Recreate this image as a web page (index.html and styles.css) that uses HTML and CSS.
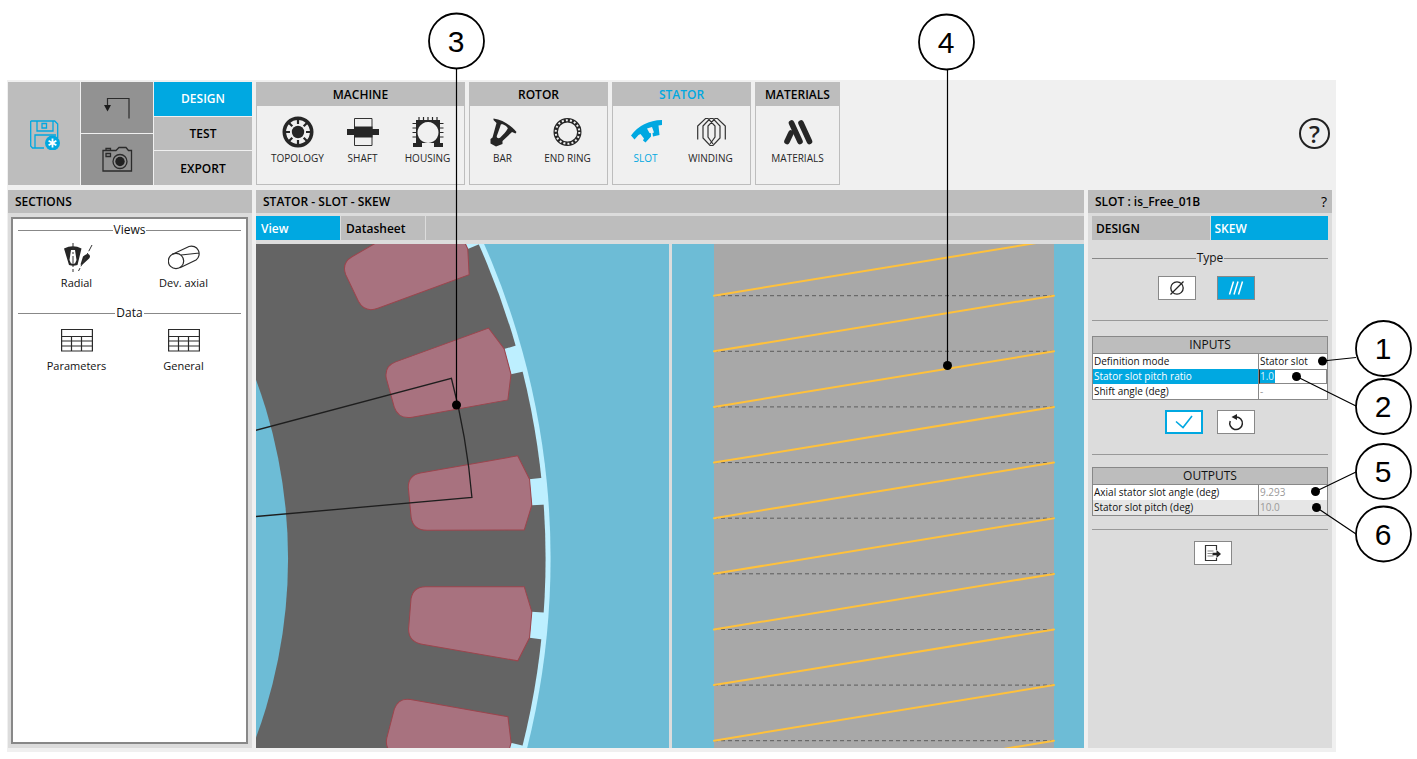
FILE: index.html
```html
<!DOCTYPE html>
<html lang="en">
<head>
<meta charset="utf-8">
<title>Stator - Slot - Skew</title>
<link rel="stylesheet" href="styles.css">
</head>
<body>
<div class="app">
  <header class="toolbar">
    <div class="file-area">
      <button class="tile tile-save" aria-label="Save">
        <svg class="icon" viewBox="0 0 32 32" fill="none" stroke="#00a8e1" stroke-width="1.3">
          <path d="M2.700 3h24l3 3v14M16 30H4.500l-1.800-2V3M9 3v10h16V3M14 5.500h4.500v4.500H14zM7 30V17h21"/>
          <circle cx="24.500" cy="25" r="7.500" fill="#00a8e1" stroke="none"/>
          <path d="M24.500 20.500v9M20.600 22.800l7.800 4.500M28.400 22.800l-7.800 4.500" stroke="#fff" stroke-width="1.800"/>
        </svg>
      </button>
      <div class="tile-pair">
        <button class="tile tile-dark" aria-label="Undo">
          <svg class="icon" viewBox="0 0 32 32" fill="none" stroke="#2b2b2b" stroke-width="1.200"><path d="M28 26.500V6.500H6.500V14"/><path d="M3 13h7l-3.500 6.500z" fill="#1c1c1c" stroke="none"/></svg>
        </button>
        <button class="tile tile-dark" aria-label="Capture">
          <svg class="icon" viewBox="0 0 32 32" fill="none" stroke="#2b2b2b" stroke-width="1.300"><path d="M2 6.500h13l3-3h7l2.500 3H30.500v20.500H2zM5 6.500v-2h4.500v2M5 9.500h4.500v3H5z"/><circle cx="19" cy="17.500" r="7"/><circle cx="19" cy="17.500" r="4.700" fill="#222" stroke="none"/></svg>
        </button>
      </div>
      <nav class="modes">
        <button class="mode is-active">DESIGN</button>
        <button class="mode">TEST</button>
        <button class="mode">EXPORT</button>
      </nav>
    </div>

    <section class="group group-machine">
      <h2 class="group-title">MACHINE</h2>
      <div class="group-items">
        <button class="tool">
          <svg class="icon" viewBox="0 0 32 32"><circle cx="16" cy="16" r="13.700" fill="none" stroke="#262626" stroke-width="3.600"/><circle cx="16" cy="16" r="6.200" fill="#262626"/><path d="M16 3v5M16 24v5M3 16h5M24 16h5M6.800 6.800l3.500 3.500M21.700 21.700l3.500 3.500M25.200 6.800l-3.500 3.500M10.300 21.700l-3.500 3.500" stroke="#262626" stroke-width="2.200"/></svg>
          TOPOLOGY</button>
        <button class="tool">
          <svg class="icon" viewBox="0 0 32 32"><path d="M7.500 2.500h17.500v27H7.500z" fill="none" stroke="#333"/><path d="M7 10.500h18.500V13H32v6h-6.500v2.500H7V19H0v-6h7z" fill="#262626"/></svg>
          SHAFT</button>
        <button class="tool">
          <svg class="icon" viewBox="0 0 32 32"><path fill="#262626" fill-rule="evenodd" d="M4 4h24v23h3v4h-9v-4H10v4H1v-4h3zM16 6a10.500 10.500 0 1 0 .01 0z"/><path d="M7 1v4M11.500 1v4M16 1v4M20.500 1v4M25 1v4M.5 7.500H5M.5 12H5M.5 16.500H5M.5 21H5M27 7.500h4.500M27 12h4.500M27 16.500h4.500M27 21h4.500" stroke="#262626" stroke-width="1.200"/></svg>
          HOUSING</button>
      </div>
    </section>
    <section class="group group-pair">
      <h2 class="group-title">ROTOR</h2>
      <div class="group-items">
        <button class="tool">
          <svg class="icon" viewBox="0 0 32 32"><path fill="#262626" fill-rule="evenodd" d="M6.500 2.500C16 4 23.500 9 29.500 16l-1 1.500-3.500-1.500-9.500 9v3L9 30.500l-5.500-3v-4.500l2-1.500L9.500 7 6.500 4zM13.800 8.500c-1 3.500-2.500 7.500-4 11.500-.5 2 2 3 3.500 1.500 3-3 5.500-5.500 7.500-9 0-2-5.500-5.500-7-4z"/></svg>
          BAR</button>
        <button class="tool">
          <svg class="icon" viewBox="0 0 32 32" fill="none"><circle cx="15.500" cy="16" r="11.800" stroke="#262626" stroke-width="4.400"/><circle cx="15.500" cy="16" r="11.800" stroke="#f0f0f0" stroke-width="2" stroke-dasharray="2 2.120"/></svg>
          END RING</button>
      </div>
    </section>
    <section class="group group-pair is-current">
      <h2 class="group-title">STATOR</h2>
      <div class="group-items">
        <button class="tool">
          <svg class="icon" viewBox="0 0 32 32"><path fill="#00a8e1" d="M1 19.500Q12 4.500 32 4v5l-3.500.5 1 9.500-6.500 1.500-.5-3.500 1.500-.5L22 11l-5 1.500 2.500 4.500 1.500.2V20.500L15.500 26.500 13 24.500l1-2L10.500 18 8.500 19l-4 4.500z"/></svg>
          SLOT</button>
        <button class="tool">
          <svg class="icon" viewBox="0 0 32 32" fill="none" stroke="#333" stroke-width="1.200"><path d="M2.700 23.500V10l7.800-7.500H13L20 10v11l-5 7M30.300 23.500V10l-7.800-7.500H20L13 10v11l5 7M8 10l7-7.500h3L25 10v12l-7 7.500h-3L8 22z"/></svg>
          WINDING</button>
      </div>
    </section>
    <section class="group group-single">
      <h2 class="group-title">MATERIALS</h2>
      <div class="group-items">
        <button class="tool">
          <svg class="icon" viewBox="0 0 32 32" stroke="#262626" stroke-width="5.600" stroke-linecap="round"><path d="M9.500 7l8.500 18.500M19 7l8.500 18.500"/><path d="M9 17l-4 8.500"/></svg>
          MATERIALS</button>
      </div>
    </section>
    <button class="help" aria-label="Help">?</button>
  </header>

  <main class="workspace">
    <aside class="panel panel-sections">
      <h2 class="panel-title">SECTIONS</h2>
      <div class="section-box">
        <h3 class="rule-title">Views</h3>
        <div class="section-grid">
          <button class="section-item">
            <svg class="icon" viewBox="0 0 32 32"><path fill="#262626" fill-rule="evenodd" d="M3 7.500Q12 3 20.500 7.500L16.500 24Q12 25.500 8 24zM10 9L8.500 19l1.500 3.500h4L15.500 19 14 9z"/><path fill="#262626" d="M22 15.500q5-4 6.500-1.500t-1.500 4.500L21 24l-1.500-.5z"/><path d="M12 2v29M31 4L17.500 30" fill="none" stroke="#333" stroke-dasharray="7 2 2 2"/></svg>
            Radial</button>
          <button class="section-item">
            <svg class="icon" viewBox="0 0 32 32" fill="none" stroke="#2b2b2b" stroke-width="1.200"><circle cx="8" cy="20" r="7.700"/><path d="M4.500 13.200L21 5.500a7.700 7.700 0 0 1 7 13.500L12 26.700M13 14L31.500 12"/></svg>
            Dev. axial</button>
        </div>
        <h3 class="rule-title">Data</h3>
        <div class="section-grid">
          <button class="section-item">
            <svg class="icon" viewBox="0 0 32 32" fill="none" stroke="#2b2b2b" stroke-width="1.200"><path d="M.6 5.500h30.800v21.500H.6zM.6 12.500h30.800M.6 17h30.800M.6 22h30.800M10.500 12.500V27M20.500 12.500V27"/></svg>
            Parameters</button>
          <button class="section-item">
            <svg class="icon" viewBox="0 0 32 32" fill="none" stroke="#2b2b2b" stroke-width="1.200"><path d="M.6 5.500h30.800v21.500H.6zM.6 12.500h30.800M.6 17h30.800M.6 22h30.800M10.500 12.500V27M20.500 12.500V27"/></svg>
            General</button>
        </div>
      </div>
    </aside>

    <section class="panel panel-view">
      <h2 class="panel-title">STATOR - SLOT - SKEW</h2>
      <div class="view-tabs">
        <button class="tab is-active">View</button>
        <button class="tab">Datasheet</button>
        <span class="tab-rest"></span>
      </div>
      <div class="canvases">
        <svg class="canvas" viewBox="256 244 412 503" preserveAspectRatio="xMinYMin slice">
          <circle cx="-226" cy="558" r="776" fill="#bdefff"/>
          <circle cx="-226" cy="558" r="771" fill="#646464"/>
          <circle cx="-226" cy="558" r="514" fill="#6dbcd6"/>
          <defs>
            <g id="slot">
              <path d="M531 611l16 1-3 27-15-2z" fill="#bdefff"/>
              <path d="M425 586H523.700L531.300 611 529 637 517.300 660 421.700 643.500Q408 641 408.300 628L410.700 598Q413 586 425 586z" fill="#a8727f" stroke="#9b454d"/>
            </g>
          </defs>
          <use href="#slot" transform="rotate(10 -226 558)"/>
          <use href="#slot"/>
          <use href="#slot" transform="rotate(-10 -226 558)"/>
          <use href="#slot" transform="rotate(-20 -226 558)"/>
          <use href="#slot" transform="rotate(-30 -226 558)"/>
          <path d="M250 431.500L451 378A700 700 0 0 1 471.500 497L250 516.500" fill="none" stroke="#1e1e1e" stroke-width="1.300"/>
        </svg>
        <svg class="canvas" viewBox="671 244 413 504" preserveAspectRatio="xMinYMin slice">
          <path d="M713 240h340v510h-340z" fill="#a8a8a8"/>
          <path d="M713 295.700h340M713 351.300h340M713 406.900h340M713 462.600h340M713 518.200h340M713 573.800h340M713 629.500h340M713 685.100h340M713 740.700h340" stroke="#5c5c5c" stroke-dasharray="4 3"/>
          <path d="M713 295.700l340-55.600M713 351.300l340-55.600M713 406.900l340-55.600M713 462.600l340-55.600M713 518.200l340-55.600M713 573.800l340-55.600M713 629.500l340-55.600M713 685.100l340-55.600M713 740.700l340-55.600M713 796.300l340-55.600" stroke="#ffc13b" stroke-width="2" stroke-linecap="round"/>
        </svg>
      </div>
    </section>

    <aside class="panel panel-slot">
      <h2 class="panel-title">SLOT : is_Free_01B<button class="panel-help">?</button></h2>
      <div class="slot-body">
        <div class="slot-tabs">
          <button class="tab">DESIGN</button>
          <button class="tab is-active">SKEW</button>
        </div>
        <h3 class="rule-title rule-type">Type</h3>
        <div class="actions actions-type">
          <button class="action" aria-label="No skew"><svg class="glyph" viewBox="0 0 20 20" fill="none" stroke="#222" stroke-width="1.300"><circle cx="10" cy="10" r="6.200"/><path d="M3.500 16.500l13-13"/></svg></button>
          <button class="action is-selected" aria-label="Skewed"><svg class="glyph" viewBox="0 0 20 20" fill="none" stroke="#fff" stroke-width="1.500"><path d="M3.500 16.500l4-13M8 16.500l4-13M12.500 16.500l4-13"/></svg></button>
        </div>
        <hr class="rule">
        <table class="grid">
          <colgroup><col class="col-name"><col></colgroup>
          <thead><tr><th colspan="2">INPUTS</th></tr></thead>
          <tbody>
            <tr><td><label for="mode">Definition mode</label></td><td><select id="mode" class="field"><option>Stator slot</option></select></td></tr>
            <tr class="is-editing"><td><label for="ratio">Stator slot pitch ratio</label></td><td><input id="ratio" class="field field-edit" value="1.0"></td></tr>
            <tr><td>Shift angle (deg)</td><td class="muted">-</td></tr>
          </tbody>
        </table>
        <div class="actions actions-apply">
          <button class="action is-confirm" aria-label="Apply"><svg class="glyph" viewBox="0 0 20 20" fill="none" stroke="#00a8e1" stroke-width="1.600"><path d="M2 9.500l7 6L18 4"/></svg></button>
          <button class="action" aria-label="Reset"><svg class="glyph" viewBox="0 0 20 20" fill="none" stroke="#222" stroke-width="1.500"><path d="M4.200 9a6.300 6.300 0 1 0 5.800-4"/><path d="M5.500 5L11 2v6z" fill="#222" stroke="none"/></svg></button>
        </div>
        <hr class="rule">
        <table class="grid">
          <colgroup><col class="col-name"><col></colgroup>
          <thead><tr><th colspan="2">OUTPUTS</th></tr></thead>
          <tbody>
            <tr><td>Axial stator slot angle (deg)</td><td class="muted">9.293</td></tr>
            <tr class="is-even"><td>Stator slot pitch (deg)</td><td class="muted">10.0</td></tr>
          </tbody>
        </table>
        <hr class="rule rule-end">
        <div class="actions actions-export">
          <button class="action" aria-label="Export"><svg class="glyph" viewBox="0 0 20 20" fill="none" stroke="#333" stroke-width="1.200"><path d="M13.500 7V2.500h-11v15h11V15"/><path d="M4.500 8h6M4.500 10.500h5M4.500 13h6" stroke="#888"/><path d="M9.500 9.800h4V7l4.500 4-4.500 4v-2.800h-4z" fill="#222" stroke="none"/></svg></button>
        </div>
      </div>
    </aside>
  </main>
</div>

<svg class="callouts" viewBox="0 0 1417 759">
  <g stroke="#000" stroke-width="1.200">
    <path d="M456.500 69v336M947.500 69v296M1356 357.500L1322.500 361M1356 406L1296.500 376.500M1356 472L1315.500 491.500M1356 534L1316.500 507.500"/>
  </g>
  <g>
    <circle cx="456.500" cy="405" r="4.500"/><circle cx="947.500" cy="365.500" r="4.500"/><circle cx="1322.500" cy="361" r="4.500"/><circle cx="1296.500" cy="376.500" r="4.500"/><circle cx="1315.500" cy="491.500" r="4.500"/><circle cx="1316.500" cy="507.500" r="4.500"/>
  </g>
  <g fill="#fff" stroke="#000" stroke-width="1.800">
    <circle cx="456.500" cy="41" r="27.500"/><circle cx="946.500" cy="42" r="27.500"/><circle cx="1383.500" cy="348.500" r="27.500"/><circle cx="1383.500" cy="406.500" r="27.500"/><circle cx="1383.500" cy="471.500" r="27.500"/><circle cx="1383.500" cy="534" r="27.500"/>
  </g>
  <g class="callout-text">
    <text x="456" y="52">3</text><text x="946" y="53">4</text><text x="1383" y="359">1</text><text x="1383" y="417">2</text><text x="1383" y="482">5</text><text x="1383" y="545">6</text>
  </g>
</svg>
</body>
</html>
```

FILE: styles.css
```css
* { box-sizing: border-box; }
body {
  margin: 0;
  padding: 80px 81px 7px 7px;
  min-height: 100vh;
  display: flex;
  position: relative;
  background: #fff;
  color: #111;
  font-family: "Open Sans", "Noto Sans", sans-serif;
  font-size: 11px;
}
button, input, select { font: inherit; color: inherit; border: 0; margin: 0; padding: 0; background: none; border-radius: 0; }
h2, h3 { margin: 0; font-size: 12px; font-weight: 600; color: #000; }
svg { display: block; }
.icon { width: 32px; height: 32px; }

.app {
  flex: 1;
  display: flex;
  flex-direction: column;
  gap: 5px;
  padding: 2px 4px 4px 1px;
  background: #f0f0f0;
}

/* Toolbar */
.toolbar { display: flex; gap: 4px; height: 103px; }
.file-area { display: grid; grid-template-columns: 72px 72px 98px; gap: 1px; width: 244px; }
.tile { display: flex; align-items: center; justify-content: center; background: #bdbdbd; }
.tile-pair { display: grid; grid-template-rows: 1fr 1fr; gap: 1px; }
.tile-dark { background: #929292; }
.modes { display: grid; grid-template-rows: repeat(3, 1fr); gap: 1px; }
.mode { background: #bdbdbd; font-size: 12px; font-weight: 600; }
.mode, .tab { color: #000; }
.mode.is-active, .tab.is-active { background: #00a8e1; color: #fff; }

.group { border: 1px solid #bdbdbd; background: #f0f0f0; }
.group-machine { width: 209px; }
.group-machine .group-items { padding-left: 8px; }
.group-pair { width: 139px; }
.group-single { width: 85px; }
.group-single .group-items { justify-content: center; }
.group-title { height: 23px; line-height: 23px; text-align: center; background: #bdbdbd; }
.group-items { display: flex; padding-top: 10px; }
.tool { width: 65px; display: flex; flex-direction: column; align-items: center; gap: 2px; font-size: 10px; line-height: 16px; white-space: nowrap; color: #262626; }
.is-current .group-title, .is-current .tool:first-child { color: #00a8e1; }
.help { width: 31px; height: 31px; margin: auto 2px auto auto; border: 2px solid #222; border-radius: 50%; font-size: 24px; line-height: 24px; font-weight: 600; color: #222; }

/* Panels */
.workspace { flex: 1; display: grid; grid-template-columns: 244px 1fr 244px; gap: 4px; }
.panel { display: flex; flex-direction: column; background: #dcdcdc; }
.panel-title { display: flex; justify-content: space-between; height: 23px; padding: 0 5px 0 7px; line-height: 23px; background: #bdbdbd; }
.panel-help { font-size: 14px; font-weight: 400; }

.section-box { flex: 1; margin: 4px 4px 4px 3px; padding: 2px 5px; border: 2px solid #888; background: #fff; }
.rule-title { display: flex; align-items: center; gap: 1px; height: 18px; font-weight: 400; line-height: 18px; color: #111; }
.rule-title::before, .rule-title::after { content: ""; flex: 1; height: 1px; background: #888; }
.section-grid { display: grid; grid-template-columns: 107px 107px; padding: 2px 5px; height: 65px; }
.section-item { display: flex; flex-direction: column; align-items: center; gap: 2px; line-height: 16px; justify-content: flex-start; }

.view-tabs { display: flex; gap: 1px; height: 24px; margin: 3px 0 4px; }
.tab { padding: 0 5px; background: #bdbdbd; text-align: left; font-size: 12px; font-weight: 600; }
.view-tabs .tab { width: 84px; }
.tab-rest { flex: 1; background: #bdbdbd; }
.canvases { flex: 1; display: grid; grid-template-columns: 1fr 1fr; gap: 3px; min-height: 0; }
.canvas { width: 100%; height: 100%; background: #6dbcd6; }

/* Slot properties */
.slot-body { padding: 3px 4px; }
.slot-tabs { display: grid; grid-template-columns: 1fr 1fr; gap: 1px; height: 24px; }
.slot-tabs .tab { padding: 0 4px; }
.rule-type { margin: 9px 0; }
.actions { display: flex; justify-content: center; gap: 14px; }
.actions-type { gap: 21px; padding-right: 7px; }
.actions-apply { margin-top: 10px; }
.actions-export { padding-left: 6px; }
.action { width: 38px; height: 24px; display: flex; align-items: center; justify-content: center; border: 1px solid #888; background: #fff; }
.action.is-selected { background: #00a8e1; }
.action.is-confirm { border: 2px solid #00a8e1; }
.glyph { width: 20px; height: 20px; }
.rule { height: 1px; margin: 20px 0 15px; border: 0; background: #999; }
.actions-apply + .rule { margin-bottom: 12px; }
.rule-end { margin: 13px 0 11px; }
.grid { width: 100%; table-layout: fixed; border-collapse: separate; border-spacing: 0; border: 1px solid #888; background: #fff; font-size: 10px; }
.col-name { width: 165px; }
.grid th { height: 17px; padding: 0; font-size: 12px; line-height: 16px; font-weight: 400; background: #bdbdbd; border-bottom: 1px solid #888; }
.grid td { height: 15px; padding: 0 1px; line-height: 15px; }
.grid td:last-child { border-left: 1px solid #888; }
.field { display: block; width: 100%; height: 15px; line-height: 15px; appearance: none; outline: 0; }
.field-edit { border: 1px solid #888; border-left-color: #222; color: #d8f2fb; background: linear-gradient(90deg, #00a8e1 15px, #fff 15px); }
.is-editing td:first-child { background: #00a8e1; color: #fff; }
.grid .is-editing td:last-child { padding: 0; }
.is-even { background: #e6e6e6; }
.muted { color: #999; }

/* Numbered callouts drawn over the interface */
.callouts { position: absolute; top: 0; left: 0; width: 100%; pointer-events: none; }
.callout-text { font-family: "Liberation Sans", Arial, sans-serif; font-size: 30px; text-anchor: middle; }
```
